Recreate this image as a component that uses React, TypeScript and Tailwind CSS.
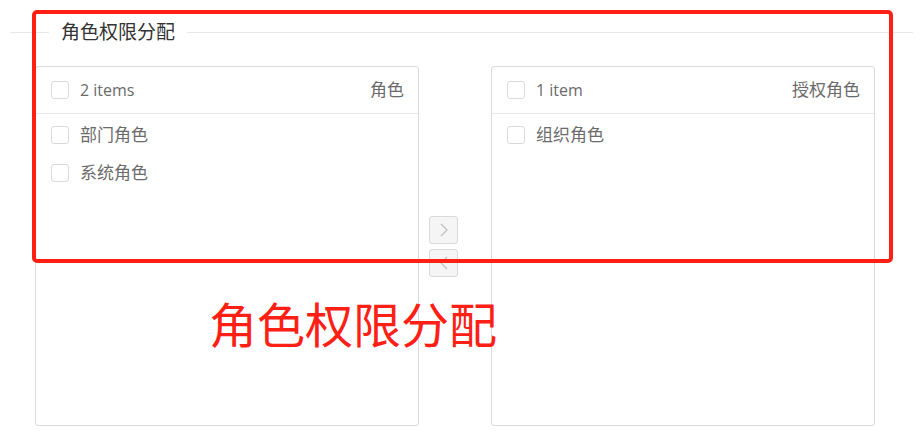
import React from "react";

interface Role {
  id: string;
  name: string;
}

const allRoles: Role[] = [
  { id: "dept", name: "部门角色" },
  { id: "sys", name: "系统角色" },
];

const grantedRoles: Role[] = [{ id: "org", name: "组织角色" }];

const Checkbox: React.FC = () => (
  <span className="block w-[18px] h-[18px] shrink-0 rounded-[3px] border border-[#d9d9d9] bg-white" />
);

const Panel: React.FC<{ title: string; items: Role[] }> = ({ title, items }) => {
  const count = items.length === 1 ? "1 item" : `${items.length} items`;
  return (
    <div className="w-[384px] h-[360px] shrink-0 rounded-[3px] border border-[#d9d9d9] bg-white flex flex-col">
      <div className="h-[47px] shrink-0 flex items-center pl-[15px] pr-[14px] border-b border-[#e8e8e8] text-[#6b6b6b]">
        <Checkbox />
        <span className="ml-[11px] text-[16px]">{count}</span>
        <span className="ml-auto text-[17px]">{title}</span>
      </div>
      <ul className="pt-[2px]">
        {items.map((item) => (
          <li key={item.id} className="h-[38px] flex items-center pl-[15px] text-[17px] text-[#6b6b6b]">
            <Checkbox />
            <span className="ml-[11px]">{item.name}</span>
          </li>
        ))}
      </ul>
    </div>
  );
};

const ArrowButton: React.FC<{ dir: "right" | "left" }> = ({ dir }) => (
  <button className="w-[29px] h-[28px] flex items-center justify-center rounded-[3px] border border-[#d9d9d9] bg-[#f5f5f5]">
    <svg width="10" height="14" viewBox="0 0 10 14" fill="none">
      <polyline
        points={dir === "right" ? "2,1 8,7 2,13" : "8,1 2,7 8,13"}
        stroke="#bfbfbf"
        strokeWidth="1.2"
      />
    </svg>
  </button>
);

export default function App() {
  return (
    <div
      className="relative w-full h-[446px] bg-white overflow-hidden"
      style={{ fontFamily: '"Open Sans", "Noto Sans CJK SC", sans-serif' }}
    >
      <div className="px-[10px] pt-[20px]">
        {/* fieldset legend */}
        <div className="flex items-center h-[24px]">
          <div className="w-[39px] border-t border-[#e8e8e8]" />
          <span className="px-[12px] text-[19px] leading-[24px] text-[#333]">角色权限分配</span>
          <div className="flex-1 border-t border-[#e8e8e8]" />
        </div>

        {/* transfer */}
        <div className="flex mt-[22px] ml-[25px]">
          <Panel title="角色" items={allRoles} />
          <div className="flex flex-col justify-center gap-[5px] ml-[10px] mr-[33px]">
            <ArrowButton dir="right" />
            <ArrowButton dir="left" />
          </div>
          <Panel title="授权角色" items={grantedRoles} />
        </div>
      </div>

      {/* annotation */}
      <div className="absolute left-[32px] top-[10px] w-[861px] h-[253px] border-4 border-[#fe2015] rounded-[5px]" />
      <div
        className="absolute left-[209px] top-[298px] text-[48px] leading-none text-[#fe2015]"
        style={{ fontFamily: '"Noto Sans CJK SC", sans-serif' }}
      >
        角色权限分配
      </div>
    </div>
  );
}
